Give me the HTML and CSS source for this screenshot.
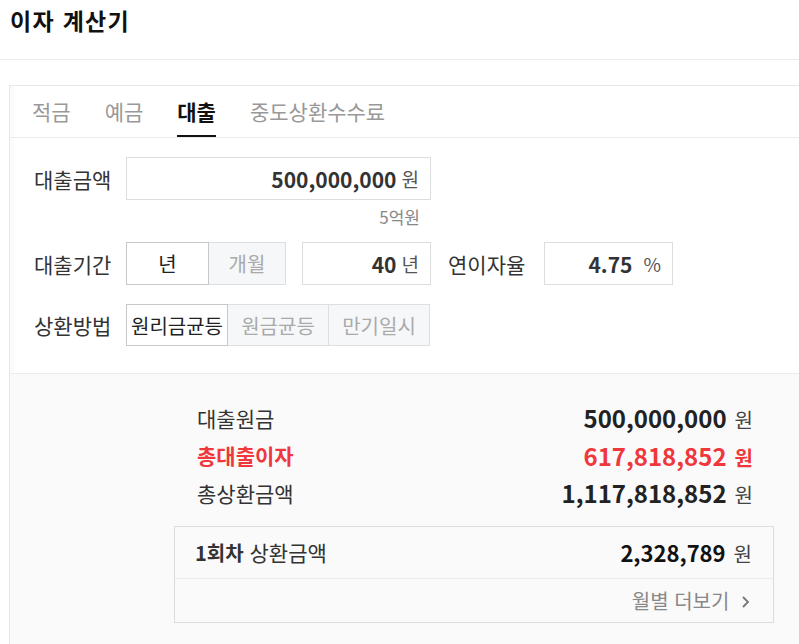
FILE: index.html
```html
<!DOCTYPE html>
<html lang="ko">
<head>
	<meta charset="UTF-8">
	<title>이자 계산기</title>
	<link rel="stylesheet" href="styles.css">
</head>
<body>
	<div class="head">
		<h1 class="title">이자 계산기</h1>
	</div>

	<div class="calc">
		<ul class="tabs">
			<li>적금</li>
			<li>예금</li>
			<li class="on">대출</li>
			<li>중도상환수수료</li>
		</ul>

		<div class="form">
			<div class="row first">
				<span class="label">대출금액</span>
				<div class="field wide"><b>500,000,000</b><span class="unit">원</span></div>
			</div>
			<p class="hint">5억원</p>

			<div class="row">
				<span class="label">대출기간</span>
				<div class="group">
					<span class="btn on period">년</span>
					<span class="btn period-m">개월</span>
				</div>
				<div class="field short"><b>40</b><span class="unit">년</span></div>
				<span class="label rate">연이자율</span>
				<div class="field short"><b>4.75</b><span class="unit pct">%</span></div>
			</div>

			<div class="row">
				<span class="label">상환방법</span>
				<div class="group">
					<span class="btn on method">원리금균등</span>
					<span class="btn method">원금균등</span>
					<span class="btn method">만기일시</span>
				</div>
			</div>
		</div>

		<!-- 결과 -->
		<div class="result">
			<div class="sum">
				<div class="line">
					<span>대출원금</span>
					<span><b>500,000,000</b><i>원</i></span>
				</div>
				<div class="line red">
					<span>총대출이자</span>
					<span><b>617,818,852</b><i>원</i></span>
				</div>
				<div class="line">
					<span>총상환금액</span>
					<span><b>1,117,818,852</b><i>원</i></span>
				</div>
			</div>
			<div class="box">
				<div class="box-top">
					<span><b>1회차</b> 상환금액</span>
					<span><b>2,328,789</b><i>원</i></span>
				</div>
				<div class="box-more">
					<a href="">월별 더보기
						<svg width="10" height="14" viewBox="0 0 10 14"><polyline points="2,2 7,7 2,12" fill="none" stroke="#777" stroke-width="1.8"/></svg>
					</a>
				</div>
			</div>
		</div>
	</div>
</body>
</html>
```

FILE: styles.css
```css
*{
	padding:0;
	margin:0;
	box-sizing:border-box;
}
body{
	font-family:"Noto Sans CJK KR", sans-serif;
	color:#333;
	background:#fff;
	overflow:hidden;
}
ul{
	list-style:none;
}
a{
	text-decoration:none;
	color:inherit;
}
b{
	font-weight:bold;
}
i{
	font-style:normal;
}
.head{
	height:60px;
	border-bottom:1px solid #ebebeb;
	padding:3px 0 0 10px;
}
.title{
	font-size:23px;
	letter-spacing:1.3px;
	line-height:34px;
	color:#111;
	font-weight:bold;
}
.calc{
	margin:25px 0 0 9px;
	border:1px solid #e8e8e8;
	border-right:none;
	box-shadow:inset 4px 0 0 #fbfbfb;
}
.tabs{
	display:flex;
	height:52px;
	border-bottom:1px solid #ebebeb;
	padding-left:22px;
	gap:34px;
}
.tabs>li{
	font-size:21px;
	line-height:50px;
	color:#999;
	border-bottom:2px solid transparent;
	cursor:pointer;
}
.tabs>li.on{
	color:#111;
	font-weight:bold;
	border-bottom-color:#111;
}
.form{
	padding:19px 0 27px 24px;
}
.row{
	display:flex;
	align-items:center;
	margin-bottom:19px;
}
.row.first{
	margin-bottom:0;
}
.row:last-child{
	margin-bottom:0;
}
.label{
	width:92px;
	font-size:21px;
	color:#333;
}
.label.rate{
	width:80px;
	margin-left:17px;
}
.field{
	height:43px;
	border:1px solid #ddd;
	display:flex;
	align-items:center;
	justify-content:flex-end;
	padding-right:11px;
	color:#333;
}
.field b{
	font-size:21px;
}
.unit{
	font-size:19px;
	color:#555;
	margin-left:5px;
}
.unit.pct{
	margin-left:11px;
}
.wide{
	width:305px;
}
.short{
	width:129px;
	margin-left:16px;
}
.hint{
	width:386px;
	text-align:right;
	font-size:17px;
	color:#888;
	line-height:22px;
	margin:6px 0 14px;
}
.group{
	display:flex;
}
.btn{
	height:43px;
	display:flex;
	align-items:center;
	justify-content:center;
	font-size:20px;
	color:#aaa;
	background:#f5f7f9;
	border:1px solid #dde0e3;
	margin-left:-1px;
}
.btn:first-child{
	margin-left:0;
}
.btn.on{
	background:#fff;
	color:#222;
	border-color:#c8c8c8;
	position:relative;
}
.period{
	width:83px;
}
.period-m{
	width:78px;
}
.method{
	width:102px;
	height:42px;
}
.result{
	background:#fafafa;
	border-top:1px solid #ececec;
	padding:25px 0 40px 164px;
}
.sum{
	width:600px;
	padding:0 21px 0 23px;
}
.line{
	display:flex;
	justify-content:space-between;
	align-items:center;
	height:37.5px;
	font-size:21px;
	color:#333;
}
.line b{
	font-size:24px;
	color:#222;
}
.line i,.box i{
	margin-left:8px;
	font-size:20px;
	color:#444;
}
.line.red,.line.red b,.line.red i{
	color:#f0373b;
}
.line.red span:first-child,.line.red i{
	font-weight:bold;
}
.box{
	width:600px;
	margin-top:14px;
	border:1px solid #dcdcdc;
}
.box-top{
	height:52px;
	display:flex;
	justify-content:space-between;
	align-items:center;
	padding:0 21px 0 20px;
	border-bottom:1px solid #ececec;
	font-size:21px;
}
.box-top b{
	font-size:22px;
	color:#111;
}
.box-top span:first-child b{
	font-size:20px;
	color:#333;
}
.box-more{
	height:43px;
	display:flex;
	justify-content:flex-end;
	align-items:center;
	padding-right:22px;
	font-size:20px;
	color:#888;
}
.box-more svg{
	margin-left:6px;
}
```
